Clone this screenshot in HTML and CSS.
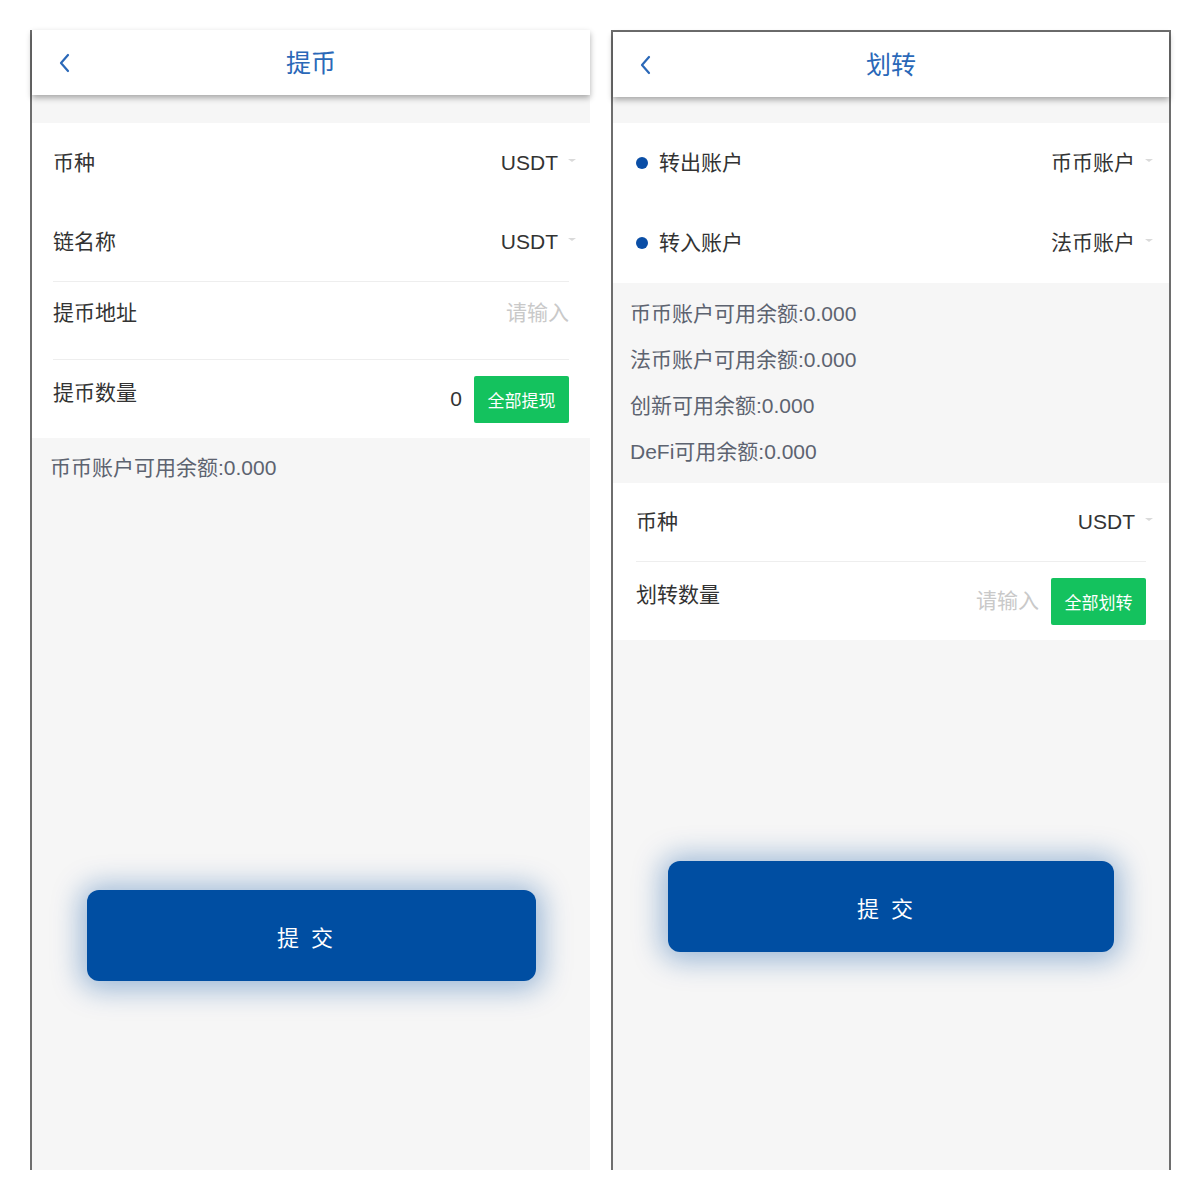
FILE: index.html
```html
<!DOCTYPE html>
<html lang="zh-CN">
<head>
  <meta charset="UTF-8" />
  <meta name="viewport" content="width=device-width, initial-scale=1.0" />
  <title>提币 / 划转</title>
  <link rel="stylesheet" href="styles.css">
</head>
<body>

  <div class="screens">

    <!-- withdraw -->
    <section class="phone phone-open">
      <header class="nav-bar">
        <svg class="back" viewBox="0 0 12 20" width="12" height="20"><path d="M10 2 L3 10 L10 18" fill="none" stroke="#2a68b8" stroke-width="2.2" stroke-linecap="round" stroke-linejoin="round"/></svg>
        <h1 class="nav-title">提币</h1>
        <span></span>
      </header>

      <div class="form-card">
        <div class="form-row">
          <span class="label">币种</span>
          <span class="value">USDT<i class="caret"></i></span>
        </div>
        <div class="form-row line">
          <span class="label">链名称</span>
          <span class="value">USDT<i class="caret"></i></span>
        </div>
        <div class="form-row line raised">
          <span class="label">提币地址</span>
          <span class="placeholder">请输入</span>
        </div>
        <div class="form-row short">
          <span class="label lift">提币数量</span>
          <span class="amount">
            <span class="value">0</span>
            <button class="all-btn">全部提现</button>
          </span>
        </div>
      </div>

      <p class="balance">币币账户可用余额:0.000</p>

      <button class="submit submit-withdraw">提 交</button>
    </section>

    <!-- transfer -->
    <section class="phone phone-boxed">
      <header class="nav-bar">
        <svg class="back" viewBox="0 0 12 20" width="12" height="20"><path d="M10 2 L3 10 L10 18" fill="none" stroke="#2a68b8" stroke-width="2.2" stroke-linecap="round" stroke-linejoin="round"/></svg>
        <h1 class="nav-title">划转</h1>
        <span></span>
      </header>

      <div class="form-card wide first">
        <div class="form-row">
          <span class="label"><i class="dot"></i>转出账户</span>
          <span class="value">币币账户<i class="caret"></i></span>
        </div>
        <div class="form-row">
          <span class="label"><i class="dot"></i>转入账户</span>
          <span class="value">法币账户<i class="caret"></i></span>
        </div>
      </div>

      <div class="balances">
        <p>币币账户可用余额:0.000</p>
        <p>法币账户可用余额:0.000</p>
        <p>创新可用余额:0.000</p>
        <p>DeFi可用余额:0.000</p>
      </div>

      <div class="form-card wide">
        <div class="form-row line">
          <span class="label">币种</span>
          <span class="value">USDT<i class="caret"></i></span>
        </div>
        <div class="form-row short">
          <span class="label lift">划转数量</span>
          <span class="amount">
            <span class="placeholder">请输入</span>
            <button class="all-btn">全部划转</button>
          </span>
        </div>
      </div>

      <button class="submit submit-transfer">提 交</button>
    </section>

  </div>

</body>
</html>
```

FILE: styles.css
```css
html, body {
  margin: 0;
  padding: 0;
  background: #fff;
  font-family: 'Liberation Sans', 'Noto Sans CJK SC', sans-serif;
  color: #333;
}

.screens {
  display: flex;
  gap: 21px;
  padding: 30px 0 0 30px;
}

.phone {
  width: 560px;
  height: 1140px;
  box-sizing: border-box;
  background: #f6f6f6;
  border-left: 2px solid #6e6e6e;
  display: flex;
  flex-direction: column;
}

.phone-boxed {
  border-top: 2px solid #6e6e6e;
  border-right: 2px solid #6e6e6e;
}

.nav-bar {
  height: 65px;
  flex-shrink: 0;
  background: #fff;
  display: grid;
  grid-template-columns: 1fr auto 1fr;
  align-items: center;
  box-shadow: 0 3px 6px rgba(0, 0, 0, 0.32);
  position: relative;
  z-index: 1;
}

.back {
  margin-left: 26px;
}

.nav-title {
  margin: 0;
  font-size: 25px;
  font-weight: normal;
  color: #2a68b8;
  line-height: 30px;
}

.form-card {
  background: #fff;
  padding: 0 21px;
  margin-top: 28px;
}

.form-card.wide {
  padding: 0 23px;
  margin-top: 0;
}

.form-card.wide.first {
  margin-top: 26px;
}

.form-row {
  height: 80px;
  box-sizing: border-box;
  display: flex;
  align-items: center;
  justify-content: space-between;
  font-size: 21px;
  line-height: 24px;
}

.form-row.line {
  border-bottom: 1px solid #eeeeee;
  height: 79px;
}

.form-row.raised {
  height: 78px;
  padding-bottom: 15px;
}

.form-row.short {
  height: 78px;
}

.label {
  display: flex;
  align-items: center;
  color: #333;
}

.label.lift {
  padding-bottom: 12px;
}

.dot {
  width: 12px;
  height: 12px;
  border-radius: 50%;
  background: #0a4ea6;
  margin-right: 11px;
}

.value {
  display: flex;
  align-items: center;
  color: #333;
}

.caret {
  width: 0;
  height: 0;
  border-left: 4px solid transparent;
  border-right: 4px solid transparent;
  border-top: 3px solid #dadada;
  margin: 0 -7px 6px 10px;
}

.placeholder {
  color: #c9c9c9;
}

.amount {
  display: flex;
  align-items: center;
  gap: 12px;
}

.all-btn {
  width: 95px;
  height: 47px;
  border: none;
  border-radius: 2px;
  background: #14c25e;
  color: #fff;
  font-family: inherit;
  font-size: 17px;
  padding: 0;
}

.balance {
  margin: 0;
  padding: 18px 18px;
  font-size: 21px;
  line-height: 24px;
  color: #5d6370;
}

.balances {
  padding: 8px 17px 8px;
}

.balances p {
  margin: 0;
  font-size: 21px;
  line-height: 46px;
  color: #5d6370;
}

.submit {
  display: block;
  height: 91px;
  border: none;
  border-radius: 12px;
  background: #004ea2;
  color: #fff;
  font-family: inherit;
  font-size: 22px;
  word-spacing: 6px;
  padding: 0 12px 0 0;
  box-shadow: 0 2px 28px 7px rgba(0, 78, 162, 0.36);
}

.submit-withdraw {
  width: 449px;
  margin: 392px auto 0;
}

.submit-transfer {
  width: 446px;
  margin: 221px auto 0;
}
```
